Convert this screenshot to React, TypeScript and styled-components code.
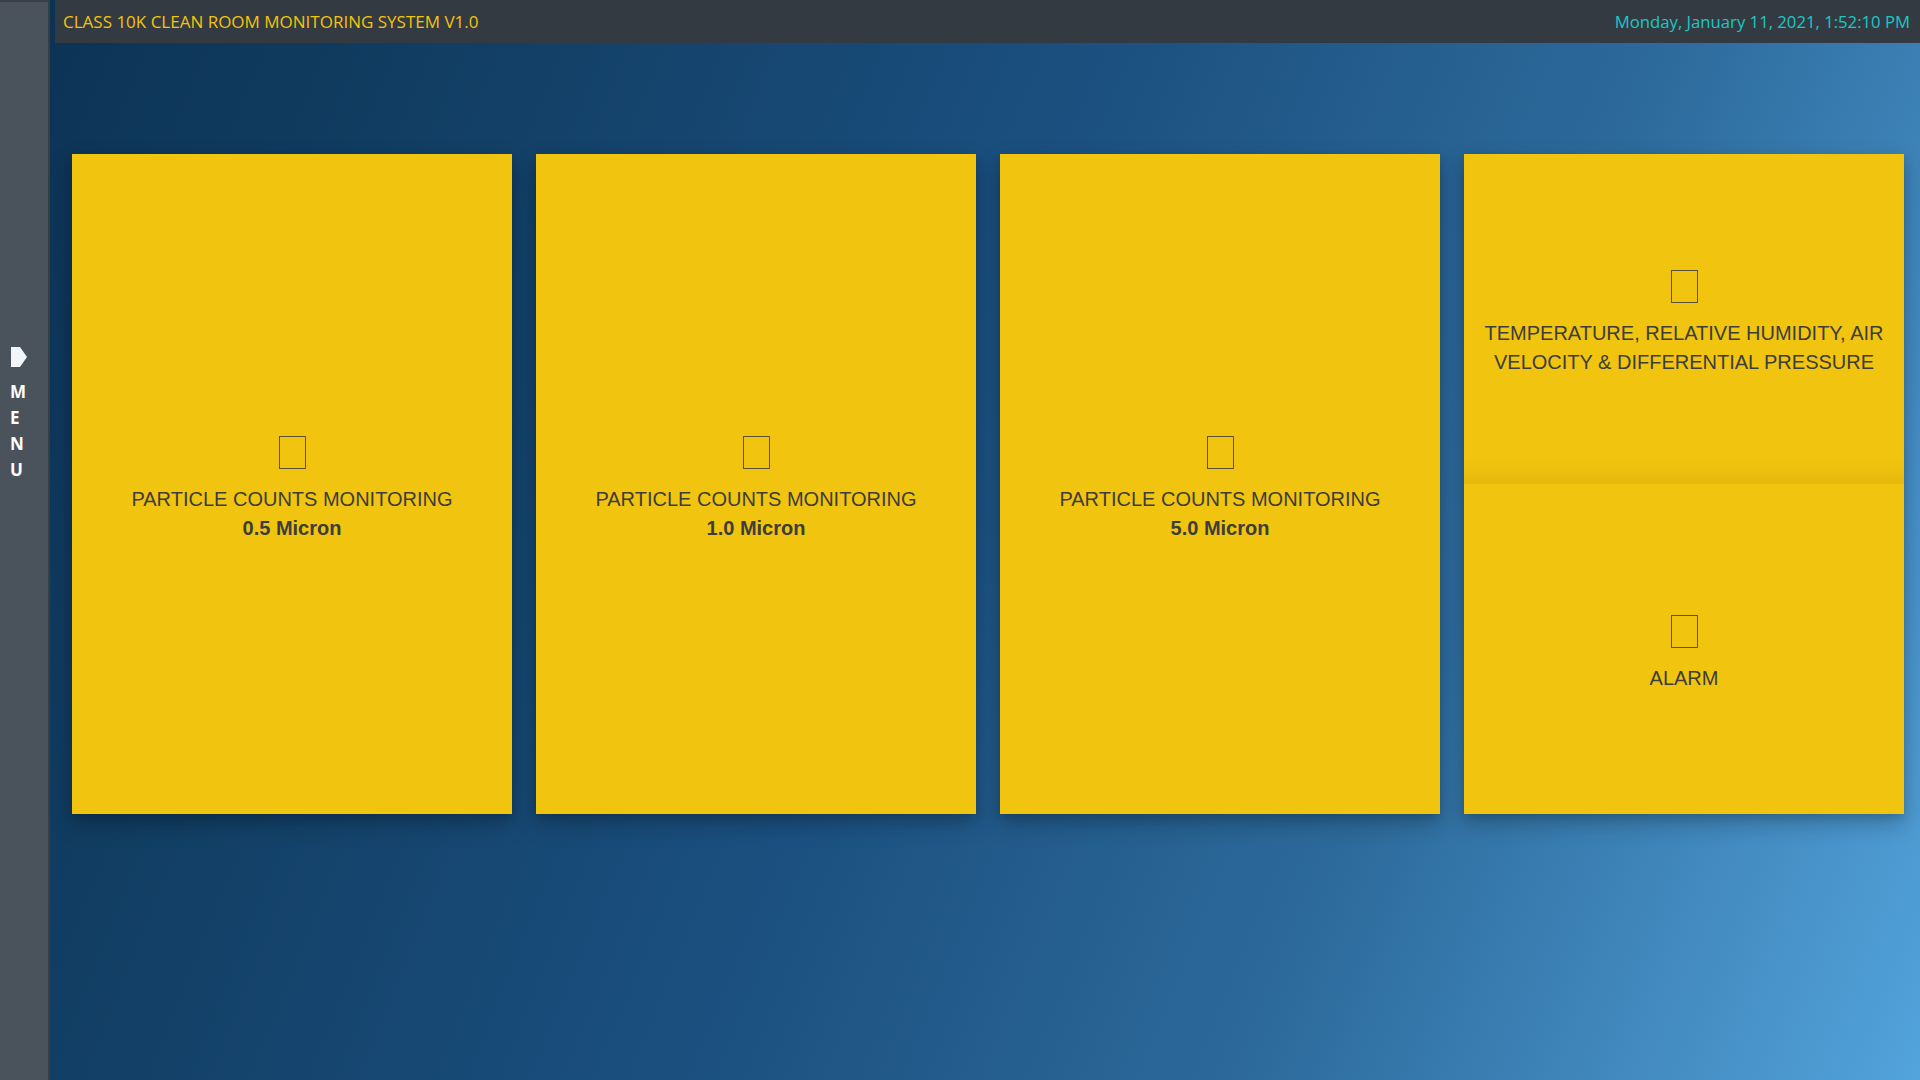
import React from "react";
import styled, { createGlobalStyle } from "styled-components";

const GlobalStyle = createGlobalStyle`
  html, body {
    margin: 0;
    padding: 0;
    height: 100%;
  }
  body {
    overflow: hidden;
    font-family: "Liberation Sans", Arial, sans-serif;
    background: linear-gradient(112deg, #0b3253 0%, #123f65 22%, #1b5080 48%, #2d6b9c 72%, #53a3dc 100%);
  }
  #root {
    height: 100%;
  }
`;

const Shell = styled.div`
  display: flex;
  width: 100vw;
  height: 100vh;
`;

const Sidebar = styled.aside`
  box-sizing: border-box;
  flex: none;
  width: 50px;
  height: 100%;
  background: #4a525c;
  border-right: 2px solid #393e44;
  border-top: 2px solid #393e44;
  padding: 345px 0 0 10px;
  display: flex;
  flex-direction: column;
  align-items: flex-start;
`;

const MenuToggle = styled.button`
  all: unset;
  cursor: pointer;
  display: flex;
  flex-direction: column;
  align-items: flex-start;
  gap: 12px;
`;

const Arrow = styled.svg`
  display: block;
  margin-left: 1px;
`;

const MenuLetters = styled.div`
  display: flex;
  flex-direction: column;
  font-family: "Open Sans", "Noto Sans", sans-serif;
  font-weight: 700;
  font-size: 17px;
  line-height: 26px;
  color: #ffffff;
`;

const Main = styled.div`
  flex: 1;
  margin-left: 5px;
  display: flex;
  flex-direction: column;
  min-width: 0;
`;

const Header = styled.header`
  box-sizing: border-box;
  height: 43px;
  flex: none;
  background: #343a42;
  display: flex;
  align-items: center;
  justify-content: space-between;
  padding: 0 10px 0 8px;
  font-family: "Open Sans", "Noto Sans", sans-serif;
`;

const Title = styled.div`
  color: #f1c40f;
  font-size: 17px;
`;

const Clock = styled.div`
  color: #1cc7c6;
  font-size: 16.7px;
`;

const Grid = styled.main`
  display: grid;
  grid-template-columns: repeat(4, 1fr);
  grid-auto-rows: 660px;
  gap: 24px;
  padding: 111px 16px 0 17px;
`;

const Card = styled.section`
  box-sizing: border-box;
  background: #f1c40f;
  box-shadow: 0 10px 22px rgba(0, 0, 0, 0.22), 0 4px 8px rgba(0, 0, 0, 0.12);
  display: flex;
  flex-direction: column;
  align-items: center;
  justify-content: center;
  padding-top: 10px;
  text-align: center;
  color: #3d3d3d;
  font-size: 20px;
  line-height: 29px;
`;

const SplitCard = styled.section`
  background: #f1c40f;
  box-shadow: 0 10px 22px rgba(0, 0, 0, 0.22), 0 4px 8px rgba(0, 0, 0, 0.12);
  display: grid;
  grid-template-rows: 1fr 1fr;
`;

const Panel = styled.div<{ $shaded?: boolean }>`
  box-sizing: border-box;
  display: flex;
  flex-direction: column;
  align-items: center;
  justify-content: center;
  text-align: center;
  padding: 9px 18px 0;
  color: #3d3d3d;
  font-size: 20px;
  line-height: 29px;
  box-shadow: ${(p) => (p.$shaded ? "inset 0 -26px 22px -20px rgba(150, 110, 0, 0.17)" : "none")};
`;

const Glyph = styled.span`
  box-sizing: border-box;
  display: block;
  width: 27px;
  height: 33px;
  border: 1.5px solid #5a5235;
  margin-bottom: 16px;
`;

const Label = styled.div``;

const Sub = styled.div`
  font-weight: 700;
`;

const particles = ["0.5 Micron", "1.0 Micron", "5.0 Micron"];

export default function App() {
  return (
    <>
      <GlobalStyle />
      <Shell>
        <Sidebar>
          <MenuToggle>
            <Arrow width="16" height="20" viewBox="0 0 16 20">
              <polygon points="0,0 9,0 16,10 9,20 0,20" fill="#f2f6fa" />
            </Arrow>
            <MenuLetters>
              <span>M</span>
              <span>E</span>
              <span>N</span>
              <span>U</span>
            </MenuLetters>
          </MenuToggle>
        </Sidebar>
        <Main>
          <Header>
            <Title>CLASS 10K CLEAN ROOM MONITORING SYSTEM V1.0</Title>
            <Clock>Monday, January 11, 2021, 1:52:10 PM</Clock>
          </Header>
          <Grid>
            {particles.map((p) => (
              <Card key={p}>
                <Glyph />
                <Label>PARTICLE COUNTS MONITORING</Label>
                <Sub>{p}</Sub>
              </Card>
            ))}
            <SplitCard>
              <Panel $shaded>
                <Glyph />
                <Label>TEMPERATURE, RELATIVE HUMIDITY, AIR VELOCITY &amp; DIFFERENTIAL PRESSURE</Label>
              </Panel>
              <Panel>
                <Glyph />
                <Label>ALARM</Label>
              </Panel>
            </SplitCard>
          </Grid>
        </Main>
      </Shell>
    </>
  );
}
